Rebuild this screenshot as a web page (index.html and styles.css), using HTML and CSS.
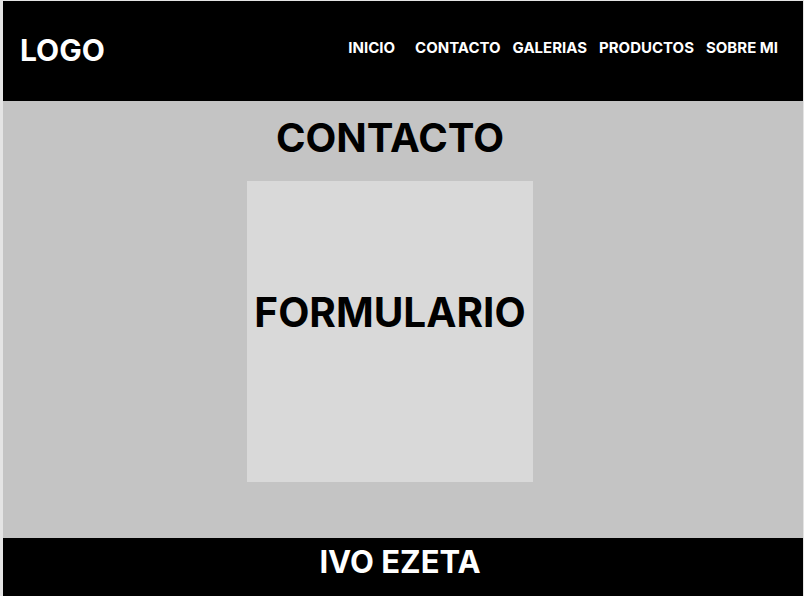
FILE: index.html
```html
<!DOCTYPE html>
<html lang="es">
<head>
    <meta charset="UTF-8">
    <meta name="viewport" content="width=device-width, initial-scale=1.0">
    <title>Contacto</title>
    <link rel="stylesheet" href="styles.css">
</head>
<body>
    <header class="header">
        <div class="logo">LOGO</div>
        <nav class="nav">
            <a href="#" class="nav-link nav-first">INICIO</a>
            <a href="#" class="nav-link">CONTACTO</a>
            <a href="#" class="nav-link">GALERIAS</a>
            <a href="#" class="nav-link">PRODUCTOS</a>
            <a href="#" class="nav-link">SOBRE MI</a>
        </nav>
    </header>

    <main class="main">
        <div class="column">
            <h1 class="title">CONTACTO</h1>
            <div class="form-box">
                <h2 class="form-label">FORMULARIO</h2>
            </div>
        </div>
    </main>

    <footer class="footer">IVO EZETA</footer>
</body>
</html>
```

FILE: styles.css
```css
body {
    margin: 0;
    padding: 1px 1px 0 3px;
    width: 800px;
    background: #e4e4e4;
    font-family: Inter, "Noto Sans", sans-serif;
    font-weight: 700;
}

.header {
    height: 100px;
    background: #000;
    color: #fff;
    display: flex;
    justify-content: space-between;
    align-items: center;
    padding: 0 25px 0 17px;
}

.logo {
    font-size: 30px;
    margin-top: -2px;
}

.nav {
    display: flex;
    gap: 12px;
    margin-top: -8px;
}

.nav-link {
    color: #fff;
    text-decoration: none;
    font-size: 15px;
}

.nav-first {
    margin-right: 8px;
}

.main {
    height: 437px;
    background: #c4c4c4;
}

.column {
    width: 286px;
    margin-left: 244px;
    display: flex;
    flex-direction: column;
    align-items: center;
}

.title {
    margin: 0;
    height: 72px;
    padding-bottom: 8px;
    display: flex;
    align-items: center;
    font-size: 40px;
    white-space: nowrap;
}

.form-box {
    width: 286px;
    height: 301px;
    background: #d9d9d9;
    display: flex;
    justify-content: center;
    align-items: center;
}

.form-label {
    margin: 0 0 38px;
    font-size: 40.5px;
}

.footer {
    height: 46px;
    padding: 0 6px 12px 0;
    background: #000;
    color: #fff;
    display: flex;
    justify-content: center;
    align-items: center;
    font-size: 31px;
}
```
